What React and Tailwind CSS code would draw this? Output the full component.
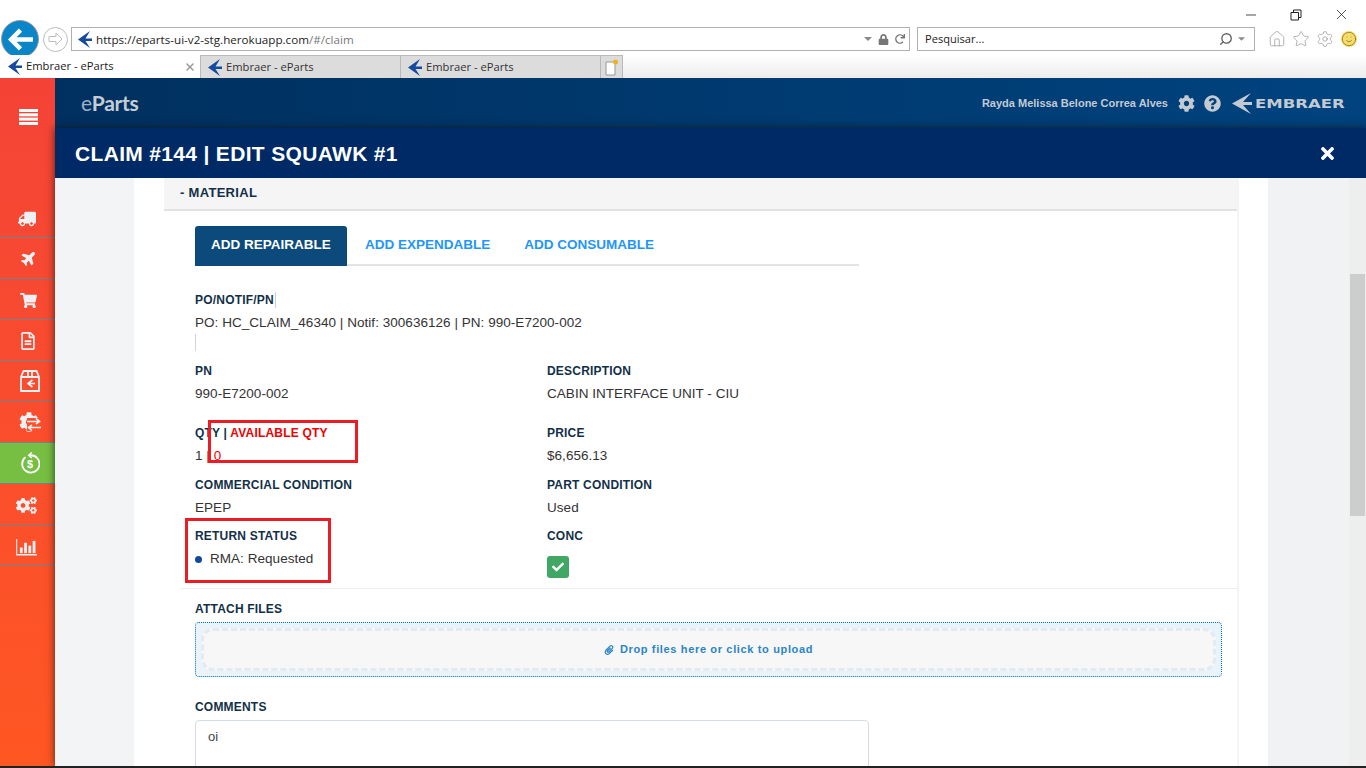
import React from "react";
import { FaTruck, FaPlane, FaShoppingCart, FaRegFileAlt, FaCog, FaCogs, FaQuestionCircle, FaTimes, FaCheck, FaLock, FaRedo, FaPaperclip } from "react-icons/fa";
import { Home, Star, Settings, Smile, Search, Minus, X } from "lucide-react";

const Favicon = () => (
    <svg width="16" height="17" viewBox="0 0 16 17">
        <path d="M13 0 L1 8.5 L13 17 L8.5 10 H15 V7.5 H8.5 Z" fill="#154a9c" />
    </svg>
);

const BoxIcon = () => (
    <svg width="20" height="22" viewBox="0 0 20 22" fill="none" stroke="#eef0f3" strokeWidth="1.8">
        <path d="M1 7 L3.5 1 H16.5 L19 7 V21 H1 Z" />
        <path d="M1 7 H19 M8 1 V7 M12 1 V7" />
        <path d="M12.5 10 L8 13.5 L12.5 17 M9 13.5 H15" strokeWidth="1.7" />
    </svg>
);

const GearSwapIcon = () => (
    <div className="relative w-[22px] h-[20px]">
        <FaCog className="text-[#eef0f3] text-[20px]" />
        <svg className="absolute right-0 top-[6px] bg-[#ff4e2c]" width="14" height="13" viewBox="0 0 14 13" fill="none" stroke="#eef0f3" strokeWidth="1.6">
            <path d="M0 3.5 H12 M9 0.5 L12.5 3.5 L9 6 M14 9.5 H2 M5 7 L1.5 9.5 L5 12.5" />
        </svg>
    </div>
);

const ReturnDollarIcon = () => (
    <svg width="20" height="22" viewBox="0 0 22 24" fill="none" stroke="#fff" strokeWidth="2">
        <path d="M6 5.5 A9.5 9.5 0 1 0 11 3.5" />
        <path d="M13 0.5 L9.5 3.5 L13 6.5" strokeWidth="1.6" />
        <text x="11" y="18" textAnchor="middle" fontSize="12" fontWeight="700" fontFamily="Liberation Sans" fill="#fff" stroke="none">$</text>
    </svg>
);

const ChartIcon = () => (
    <svg width="21" height="17" viewBox="0 0 22 18" fill="#eef0f3">
        <path d="M0 0 H1.2 V16 H22 V17.4 H0 Z" />
        <rect x="4" y="9" width="3" height="6" />
        <rect x="8.5" y="4" width="3" height="11" />
        <rect x="13" y="7" width="3" height="8" />
        <rect x="17.5" y="2" width="3" height="13" />
    </svg>
);

const MenuIcon = () => (
    <svg width="19" height="16" viewBox="0 0 19 16" fill="#fff">
        <rect y="0" width="19" height="3" />
        <rect y="4.3" width="19" height="3" />
        <rect y="8.6" width="19" height="3" />
        <rect y="13" width="19" height="3" />
    </svg>
);

const EmbraerLogo = () => (
    <div className="flex items-center gap-[3px] text-[#c4cad2]">
        <svg width="20" height="21" viewBox="0 0 20 21" fill="#c4cad2">
            <path d="M19 0 L0 10.5 L19 21 L11 12 H20 V9 H11 Z" />
        </svg>
        <span className="w-[90px] font-['DejaVu_Sans'] font-bold text-[13px] leading-none scale-x-[1.27] origin-left whitespace-nowrap">EMBRAER</span>
    </div>
);

const BrowserTab = ({ active }) => (
    <div className={`h-full flex items-center gap-[3px] border-r border-[#b9b9b9] ${active ? "w-[201px] pl-[7px] bg-white text-[#1a1a1a]" : "w-[200px] pl-[6px] bg-[#dcdcdc] border-t text-[#333]"}`}>
        <Favicon />
        <span className="text-[11.2px]">Embraer - eParts</span>
        {active && <X size={12} strokeWidth={3} className="ml-auto mr-[4px] text-[#999]" />}
    </div>
);

const BrowserChrome = () => (
    <div className="h-[78px] bg-white font-['Open_Sans',sans-serif] shrink-0">
        <div className="h-[27px] pt-[2px] flex justify-end items-center pr-[16px] gap-[31px] text-[#222]">
            <Minus size={16} strokeWidth={1.2} />
            <svg width="12" height="12" viewBox="0 0 12 12" fill="none" stroke="#222"><path d="M1 3.5 H8.5 V11 H1 Z M3.5 3.5 V1 H11 V8.5 H8.5" /></svg>
            <X size={17} strokeWidth={1.1} />
        </div>
        <div className="h-[24px] flex items-center relative">
            <div className="absolute left-[1px] top-[-7px] w-[38px] h-[38px] rounded-full bg-[#0a86c8] border border-[#9a9a9a] flex items-center justify-center">
                <svg width="25" height="23" viewBox="0 0 24 22" fill="none" stroke="#fff" strokeWidth="4.4"><path d="M12 2 L3 11 L12 20 M4 11 H24" /></svg>
            </div>
            <div className="ml-[43px] w-[25px] h-[25px] rounded-full border border-[#bdbdbd] flex items-center justify-center shrink-0">
                <svg width="16" height="14" viewBox="0 0 16 14" fill="none" stroke="#bdbdbd"><path d="M8 1 L14 7 L8 13 V9.5 H1 V4.5 H8 Z" /></svg>
            </div>
            <div className="ml-[3px] w-[839px] h-[24px] border border-[#b0b0b0] flex items-center pl-[5px] pr-[4px] shrink-0">
                <Favicon />
                <span className="ml-[3px] mt-[1px] text-[11.65px] text-[#222]">https://eparts-ui-v2-stg.herokuapp.com<span className="text-[#777]">/#/claim</span></span>
                <svg className="ml-auto" width="8" height="4" viewBox="0 0 8 4" fill="#8a8a8a"><path d="M0 0 H8 L4 4 Z" /></svg>
                <FaLock className="ml-[6px] text-[#777] text-[11px]" />
                <FaRedo className="ml-[6px] text-[#777] text-[10px]" />
            </div>
            <div className="ml-[7px] w-[338px] h-[24px] border border-[#b0b0b0] flex items-center pl-[7px] pr-[9px] shrink-0">
                <span className="mt-[1px] text-[11.1px] text-[#222]">Pesquisar...</span>
                <Search size={14} strokeWidth={2.4} className="ml-auto text-[#666] -scale-x-100" />
                <svg className="ml-[5px]" width="7" height="4" viewBox="0 0 8 4" fill="#8a8a8a"><path d="M0 0 H8 L4 4 Z" /></svg>
            </div>
            <div className="ml-[13px] flex items-center gap-[6px]">
                <Home size={18} strokeWidth={1} className="text-[#9a9a9a]" />
                <Star size={18} strokeWidth={1} className="text-[#9a9a9a]" />
                <Settings size={18} strokeWidth={1} className="text-[#9a9a9a]" />
                <Smile size={16} strokeWidth={1.2} className="ml-[1px] text-[#8a7a20] bg-[#f6dc6a] rounded-full" />
            </div>
        </div>
        <div className="relative z-10 h-[23px] mt-[4px] flex bg-gradient-to-b from-white to-[#ececec]">
            <BrowserTab active />
            <BrowserTab />
            <BrowserTab />
            <div className="w-[22px] h-full bg-[#dcdcdc] border-t border-r border-[#b9b9b9] flex items-center justify-center">
                <svg width="14" height="17" viewBox="0 0 14 17"><path d="M1 3 H10 V16 H1 Z" fill="#fff" stroke="#999" /><circle cx="10.5" cy="3" r="2.5" fill="#f2b01e" /></svg>
            </div>
        </div>
    </div>
);

const sideItems = [
    { icon: <FaTruck className="text-[18px] -scale-x-100 text-[#eef0f3] -translate-x-[1px] translate-y-[2px]" /> },
    { icon: <FaPlane className="text-[16px] -rotate-45 text-[#eef0f3] translate-x-[1px]" /> },
    { icon: <FaShoppingCart className="text-[17px] text-[#eef0f3] translate-y-[1px]" /> },
    { icon: <FaRegFileAlt className="text-[18px] text-[#eef0f3] translate-y-[1px]" /> },
    { icon: <div className="translate-x-[2px]"><BoxIcon /></div> },
    { icon: <div className="translate-x-[2px]"><GearSwapIcon /></div> },
    { icon: <div className="translate-x-[2px]"><ReturnDollarIcon /></div>, active: true },
    { icon: <FaCogs className="text-[21px] text-[#eef0f3] -translate-x-[2px] translate-y-[1px]" /> },
    { icon: <div className="-translate-x-[2px] translate-y-[2px]"><ChartIcon /></div> },
];

const Sidebar = () => (
    <div className="w-[55px] shrink-0 bg-gradient-to-b from-[#f44336] to-[#ff5722] flex flex-col">
        <div className="h-[119px] flex items-start justify-center pt-[31px] pl-[1px]">
            <MenuIcon />
        </div>
        {sideItems.map((item, i) => (
            <div key={i} className={`h-[41px] flex items-center justify-center pl-[1px] border-b border-[#6f8390] ${item.active ? "bg-[#76bf43]" : ""}`}>
                {item.icon}
            </div>
        ))}
    </div>
);

const TopBar = () => (
    <div className="h-[50px] shrink-0 bg-gradient-to-r from-[#00305f] to-[#00437f] flex items-center pl-[26px] pr-[21px]">
        <span className="font-['Lato',sans-serif] font-bold text-[21px] tracking-[-0.3px] text-[#c5cdd6]"><span className="font-normal text-[#9fb0c2]">e</span>Parts</span>
        <span className="ml-auto font-['Liberation_Sans',sans-serif] font-bold text-[11px] text-[#c3cad3]">Rayda Melissa Belone Correa Alves</span>
        <FaCog className="ml-[10px] text-[17px] text-[#c4cad2]" />
        <FaQuestionCircle className="ml-[9px] text-[17px] text-[#c4cad2]" />
        <div className="ml-[11px]">
            <EmbraerLogo />
        </div>
    </div>
);

const Label = ({ children, className = "" }) => (
    <div className={`h-[16px] leading-[16px] text-[12px] font-bold tracking-[0.2px] text-[#123049] ${className}`}>{children}</div>
);

const Value = ({ children }) => (
    <div className="mt-[5px] h-[20px] leading-[20px] text-[13.5px] tracking-[0.04px] text-[#333]">{children}</div>
);

const Field = ({ label, value }) => (
    <div>
        <Label>{label}</Label>
        <Value>{value}</Value>
    </div>
);

const MaterialPanel = () => (
    <div className="relative h-full border-r-2 border-[#f4f4f4] overflow-hidden">
        <div className="h-[33px] pb-[2px] bg-[#f5f5f5] border-b-2 border-[#e2e2e2] pl-[16px] flex items-center text-[13px] font-bold tracking-[0.3px] text-[#123049]">- MATERIAL</div>

        <div className="pl-[31px] pr-[15px]">
            <div className="mt-[15px] w-[664px] h-[40px] border-b-2 border-[#e4e4e4] flex items-stretch text-[13.5px] font-bold">
                <div className="w-[152px] h-[40px] pb-[1px] rounded-t-[3px] bg-[#0c4a7c] text-white flex items-center justify-center">ADD REPAIRABLE</div>
                <div className="ml-[18px] pt-[1px] flex items-center text-[#1e96fc]">ADD EXPENDABLE</div>
                <div className="ml-[34px] pt-[1px] flex items-center text-[#1e96fc]">ADD CONSUMABLE</div>
            </div>

            <div className="mt-[26px]">
                <Label><span className="pr-[1px] border-r border-[#cfcfcf] inline-block">PO/NOTIF/PN</span></Label>
                <Value>PO: HC_CLAIM_46340 | Notif: 300636126 | PN: 990-E7200-002</Value>
                <div className="mt-[1px] h-[17px] border-l border-[#d5d5d5]"></div>
            </div>

            <div className="mt-[12px] grid grid-cols-[352px_1fr]">
                <Field label="PN" value="990-E7200-002" />
                <Field label="DESCRIPTION" value="CABIN INTERFACE UNIT - CIU" />
            </div>
            <div className="mt-[21px] grid grid-cols-[352px_1fr]">
                <Field label={<>QTY | <span className="text-[#f00000]">AVAILABLE QTY</span></>} value={<>1 | <span className="text-[#f00000]">0</span></>} />
                <Field label="PRICE" value="$6,656.13" />
            </div>
            <div className="mt-[11px] grid grid-cols-[352px_1fr]">
                <Field label="COMMERCIAL CONDITION" value="EPEP" />
                <Field label="PART CONDITION" value="Used" />
            </div>
            <div className="mt-[10px] grid grid-cols-[352px_1fr]">
                <Field label="RETURN STATUS" value={<span className="flex items-center"><span className="w-[7px] h-[7px] rounded-full bg-[#12479e] mr-[8px]"></span>RMA: Requested</span>} />
                <div>
                    <Label>CONC</Label>
                    <div className="mt-[12px] w-[22px] h-[22px] rounded-[3px] bg-[#40a864] flex items-center justify-center">
                        <FaCheck className="text-white text-[12px]" />
                    </div>
                </div>
            </div>
        </div>

        <div className="mt-[10px] ml-[16px] border-t border-[#eeeeee]"></div>

        <div className="pl-[31px] pr-[15px] pt-[12px]">
            <Label>ATTACH FILES</Label>
            <div className="mt-[5px] h-[55px] rounded-[4px] border border-dotted border-[#0070c8] bg-[#ebf3fa] p-[5px]">
                <div className="h-full rounded-[12px] border-[3px] border-dashed border-[#e3ebf2] bg-[#f7f7f7] flex items-center justify-center text-[11px] font-bold tracking-[0.65px] text-[#2a85c5]">
                    <FaPaperclip className="mr-[6px] text-[10px]" />
                    Drop files here or click to upload
                </div>
            </div>

            <Label className="mt-[22px]">COMMENTS</Label>
            <div className="mt-[5px] w-[674px] h-[100px] rounded-[4px] border border-[#d5dbe6] pl-[12px] pt-[6px] text-[13px] text-[#444]">oi</div>
        </div>

        {/* red marks drawn on top of the screenshot */}
        <div className="absolute left-[44px] top-[242px] w-[150px] h-[43px] border-[3px] border-[#ed1c24]"></div>
        <div className="absolute left-[21px] top-[340px] w-[146px] h-[65px] border-[3px] border-[#ed1c24]"></div>
    </div>
);

const Modal = () => (
    <div className="relative z-10 flex-1 min-h-0 flex flex-col shadow-[0_0_8px_rgba(20,20,20,0.75)]">
        <div className="h-[50px] shrink-0 bg-[#002a66] flex items-center pl-[20px] pr-[29px] text-white">
            <span className="pt-[1px] text-[21px] font-bold tracking-[0.33px]">CLAIM #144 | EDIT SQUAWK #1</span>
            <FaTimes className="ml-auto text-[19px]" />
        </div>
        <div className="flex-1 min-h-0 flex bg-[#f3f4f6]">
            <div className="w-[79px] shrink-0"></div>
            <div className="w-[1134px] shrink-0 bg-white pl-[30px] pr-[29px] min-h-0">
                <MaterialPanel />
            </div>
            <div className="w-[81px] shrink-0 bg-[#f1f2f4]"></div>
            <div className="w-[17px] shrink-0 bg-[#eeeeee] pt-[96px]">
                <div className="ml-[1px] w-[15px] h-[242px] bg-[#cdcdcd]"></div>
            </div>
        </div>
    </div>
);

const App = () => {
    return (
        <div className="h-screen w-full overflow-hidden flex flex-col font-['Liberation_Sans',Arial,sans-serif]">
            <BrowserChrome />
            <div className="flex-1 min-h-0 flex overflow-hidden">
                <Sidebar />
                <div className="flex-1 min-w-0 flex flex-col">
                    <TopBar />
                    <Modal />
                </div>
            </div>
            <div className="h-[2px] shrink-0 bg-[#222]"></div>
        </div>
    );
};

export default App;
